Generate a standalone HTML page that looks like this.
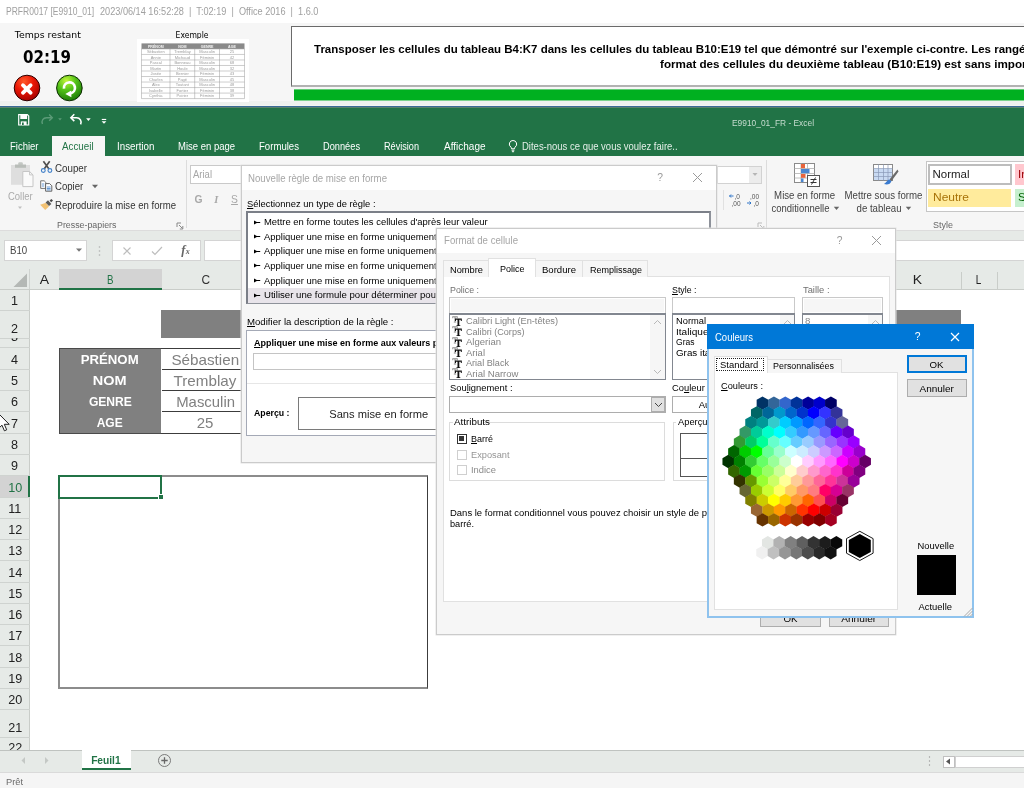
<!DOCTYPE html>
<html lang="fr"><head><meta charset="utf-8"><title>E9910_01_FR - Excel</title>
<style>
html,body{margin:0;padding:0;}
body{width:1024px;height:788px;overflow:hidden;position:relative;background:#fff;font-family:'Liberation Sans',sans-serif;font-size:12px;}
#root{will-change:transform;position:absolute;left:0;top:0;width:1024px;height:788px;overflow:hidden;}
#root div,#root svg{position:absolute;box-sizing:border-box;}
.t{position:absolute;white-space:pre;display:block;}
.t u{text-decoration:underline;text-underline-offset:1px;}
</style></head><body><div id="root">
<div style="left:0px;top:0px;width:1024px;height:23px;background:#fff;"></div><span class="t" style="left:5.90px;top:4.50px;line-height:13px;font-size:10px;color:#a0a0a0;transform:scaleX(0.8510);transform-origin:0 50%;">PRFR0017 [E9910_01]</span><span class="t" style="left:99.60px;top:4.50px;line-height:13px;font-size:10px;color:#a0a0a0;transform:scaleX(0.9149);transform-origin:0 50%;">2023/06/14 16:52:28  |  T:02:19  |  Office 2016  |  1.6.0</span><div style="left:0px;top:23px;width:1024px;height:78px;background:#f6f6f6;"></div><div style="left:0px;top:101px;width:1024px;height:5px;background:#eef1ee;"></div><span class="t" style="left:15.28px;top:28.60px;line-height:12px;font-size:9.3px;color:#000;font-family:'DejaVu Sans', sans-serif;transform:scaleX(1.0055);transform-origin:50% 50%;">Temps restant</span><span class="t" style="left:20.14px;top:45.70px;line-height:22px;font-size:17px;color:#000;font-weight:700;font-family:'DejaVu Sans', sans-serif;transform:scaleX(0.8868);transform-origin:50% 50%;">02:19</span><span class="t" style="left:171.76px;top:28.60px;line-height:12px;font-size:9.3px;color:#000;font-family:'DejaVu Sans', sans-serif;transform:scaleX(0.8234);transform-origin:50% 50%;">Exemple</span><svg style="left:12px;top:73px" width="30" height="30" viewBox="0 0 30 30">
<defs><radialGradient id="rg" cx="38%" cy="25%" r="80%"><stop offset="0" stop-color="#ff5a2a"/><stop offset="0.45" stop-color="#ec1806"/><stop offset="1" stop-color="#a00000"/></radialGradient>
<radialGradient id="gg" cx="38%" cy="22%" r="80%"><stop offset="0" stop-color="#c4f53a"/><stop offset="0.45" stop-color="#55c418"/><stop offset="1" stop-color="#1c7a08"/></radialGradient></defs>
<circle cx="15" cy="15" r="12.800" fill="url(#rg)" stroke="#2c0000" stroke-width="1"/>
<path d="M10.900 12.200 L18.700 19.800 M18.700 12.200 L10.900 19.800" stroke="#fff" stroke-width="3.700" stroke-linecap="round"/></svg><svg style="left:54px;top:73px" width="30" height="30" viewBox="0 0 30 30">
<circle cx="15.400" cy="15" r="12.800" fill="url(#gg)" stroke="#0c2c00" stroke-width="1"/>
<path d="M10 15.600 A5.500 5.500 0 1 1 16.500 20.300" fill="none" stroke="#fff" stroke-width="2.700"/>
<path d="M11.300 20.900 L17.200 17.500 L17.400 24.200 Z" fill="#fff"/></svg><svg style="left:137px;top:39px" width="112" height="63" viewBox="0 0 112 63"><rect width="112" height="63" fill="#fff"/><rect x="4.5" y="4.4" width="103.0" height="5.5200000000000005" fill="#8a8a8a"/><line x1="4.5" y1="9.92" x2="107.5" y2="9.92" stroke="#9a9a9a" stroke-width="0.5"/><line x1="4.5" y1="15.44" x2="107.5" y2="15.44" stroke="#9a9a9a" stroke-width="0.5"/><line x1="4.5" y1="20.96" x2="107.5" y2="20.96" stroke="#9a9a9a" stroke-width="0.5"/><line x1="4.5" y1="26.48" x2="107.5" y2="26.48" stroke="#9a9a9a" stroke-width="0.5"/><line x1="4.5" y1="32.00" x2="107.5" y2="32.00" stroke="#9a9a9a" stroke-width="0.5"/><line x1="4.5" y1="37.52" x2="107.5" y2="37.52" stroke="#9a9a9a" stroke-width="0.5"/><line x1="4.5" y1="43.04" x2="107.5" y2="43.04" stroke="#9a9a9a" stroke-width="0.5"/><line x1="4.5" y1="48.56" x2="107.5" y2="48.56" stroke="#9a9a9a" stroke-width="0.5"/><line x1="4.5" y1="54.08" x2="107.5" y2="54.08" stroke="#9a9a9a" stroke-width="0.5"/><line x1="4.5" y1="59.60" x2="107.5" y2="59.60" stroke="#9a9a9a" stroke-width="0.5"/><line x1="4.5" y1="9.92" x2="4.5" y2="59.6" stroke="#9a9a9a" stroke-width="0.5"/><line x1="33" y1="9.92" x2="33" y2="59.6" stroke="#9a9a9a" stroke-width="0.5"/><line x1="57.7" y1="9.92" x2="57.7" y2="59.6" stroke="#9a9a9a" stroke-width="0.5"/><line x1="82.5" y1="9.92" x2="82.5" y2="59.6" stroke="#9a9a9a" stroke-width="0.5"/><line x1="107.5" y1="9.92" x2="107.5" y2="59.6" stroke="#9a9a9a" stroke-width="0.5"/><text x="18.8" y="8.51" font-size="3.6" font-weight="bold" fill="#f4f4f4" text-anchor="middle">PRÉNOM</text><text x="45.4" y="8.51" font-size="3.6" font-weight="bold" fill="#f4f4f4" text-anchor="middle">NOM</text><text x="70.1" y="8.51" font-size="3.6" font-weight="bold" fill="#f4f4f4" text-anchor="middle">GENRE</text><text x="95.0" y="8.51" font-size="3.6" font-weight="bold" fill="#f4f4f4" text-anchor="middle">AGE</text><text x="18.8" y="14.03" font-size="4" fill="#9c9c9c" text-anchor="middle">Sébastien</text><text x="45.4" y="14.03" font-size="4" fill="#9c9c9c" text-anchor="middle">Tremblay</text><text x="70.1" y="14.03" font-size="4" fill="#9c9c9c" text-anchor="middle">Masculin</text><text x="95.0" y="14.03" font-size="4" fill="#9c9c9c" text-anchor="middle">25</text><text x="18.8" y="19.55" font-size="4" fill="#9c9c9c" text-anchor="middle">Annie</text><text x="45.4" y="19.55" font-size="4" fill="#9c9c9c" text-anchor="middle">Michaud</text><text x="70.1" y="19.55" font-size="4" fill="#9c9c9c" text-anchor="middle">Féminin</text><text x="95.0" y="19.55" font-size="4" fill="#9c9c9c" text-anchor="middle">42</text><text x="18.8" y="25.07" font-size="4" fill="#9c9c9c" text-anchor="middle">Pascal</text><text x="45.4" y="25.07" font-size="4" fill="#9c9c9c" text-anchor="middle">Bonneau</text><text x="70.1" y="25.07" font-size="4" fill="#9c9c9c" text-anchor="middle">Masculin</text><text x="95.0" y="25.07" font-size="4" fill="#9c9c9c" text-anchor="middle">68</text><text x="18.8" y="30.59" font-size="4" fill="#9c9c9c" text-anchor="middle">Martin</text><text x="45.4" y="30.59" font-size="4" fill="#9c9c9c" text-anchor="middle">Houle</text><text x="70.1" y="30.59" font-size="4" fill="#9c9c9c" text-anchor="middle">Masculin</text><text x="95.0" y="30.59" font-size="4" fill="#9c9c9c" text-anchor="middle">32</text><text x="18.8" y="36.11" font-size="4" fill="#9c9c9c" text-anchor="middle">Josée</text><text x="45.4" y="36.11" font-size="4" fill="#9c9c9c" text-anchor="middle">Bernier</text><text x="70.1" y="36.11" font-size="4" fill="#9c9c9c" text-anchor="middle">Féminin</text><text x="95.0" y="36.11" font-size="4" fill="#9c9c9c" text-anchor="middle">43</text><text x="18.8" y="41.63" font-size="4" fill="#9c9c9c" text-anchor="middle">Charles</text><text x="45.4" y="41.63" font-size="4" fill="#9c9c9c" text-anchor="middle">Pagé</text><text x="70.1" y="41.63" font-size="4" fill="#9c9c9c" text-anchor="middle">Masculin</text><text x="95.0" y="41.63" font-size="4" fill="#9c9c9c" text-anchor="middle">45</text><text x="18.8" y="47.15" font-size="4" fill="#9c9c9c" text-anchor="middle">Alex</text><text x="45.4" y="47.15" font-size="4" fill="#9c9c9c" text-anchor="middle">Toutant</text><text x="70.1" y="47.15" font-size="4" fill="#9c9c9c" text-anchor="middle">Masculin</text><text x="95.0" y="47.15" font-size="4" fill="#9c9c9c" text-anchor="middle">48</text><text x="18.8" y="52.67" font-size="4" fill="#9c9c9c" text-anchor="middle">Isabelle</text><text x="45.4" y="52.67" font-size="4" fill="#9c9c9c" text-anchor="middle">Fortier</text><text x="70.1" y="52.67" font-size="4" fill="#9c9c9c" text-anchor="middle">Féminin</text><text x="95.0" y="52.67" font-size="4" fill="#9c9c9c" text-anchor="middle">38</text><text x="18.8" y="58.19" font-size="4" fill="#9c9c9c" text-anchor="middle">Cynthia</text><text x="45.4" y="58.19" font-size="4" fill="#9c9c9c" text-anchor="middle">Poirier</text><text x="70.1" y="58.19" font-size="4" fill="#9c9c9c" text-anchor="middle">Féminin</text><text x="95.0" y="58.19" font-size="4" fill="#9c9c9c" text-anchor="middle">39</text></svg><div style="left:291px;top:26px;width:740px;height:61px;background:#fff;border:1px solid #6a6a6a;border-bottom:2px solid #b2b2b2;"></div><span class="t" style="left:314.00px;top:42.00px;line-height:14px;font-size:10.5px;color:#000;font-weight:700;transform:scaleX(1.0942);transform-origin:0 50%;">Transposer les cellules du tableau B4:K7 dans les cellules du tableau B10:E19 tel que démontré sur l&#x27;exemple ci-contre. Les rangées</span><span class="t" style="left:660.00px;top:56.50px;line-height:14px;font-size:10.5px;color:#000;font-weight:700;transform:scaleX(1.1100);transform-origin:0 50%;">format des cellules du deuxième tableau (B10:E19) est sans importance</span><div style="left:294px;top:89px;width:740px;height:12px;background:#00b020;border-top:1px solid #62cc76;border-bottom:1px solid #7bd38b;"></div><div style="left:0px;top:105px;width:1024px;height:1px;background:#f3f5f0;"></div><div style="left:0px;top:106px;width:1024px;height:1px;background:#3a6a96;"></div><div style="left:0px;top:107px;width:1024px;height:1px;background:#5a826e;"></div><div style="left:0px;top:108px;width:1024px;height:47.5px;background:#217346;"></div><svg style="left:16px;top:112px" width="100" height="18" viewBox="0 0 100 18">
<path d="M2.700 2.700h8.600l1.400 1.400v8.900h-10z" fill="none" stroke="#fff" stroke-width="1.200"/><rect x="4.300" y="2.700" width="6.800" height="4.300" fill="#fff"/><rect x="4.800" y="9.400" width="5.800" height="3.600" fill="#fff"/><rect x="6" y="10.500" width="1.700" height="2.500" fill="#217346"/>
<path d="M26.500 12c-1.500-3.200.8-6.300 4-6.300h5" fill="none" stroke="#5c9b78" stroke-width="1.400"/><path d="M33.200 2.600l3.100 3.100-3.100 3.100" fill="none" stroke="#5c9b78" stroke-width="1.400"/>
<path d="M42.200 6.200h3.600l-1.800 2.200z" fill="#5c9b78"/>
<path d="M64.600 12.400c1.600-3.300-.7-6.700-4-6.700h-5.200" fill="none" stroke="#fff" stroke-width="1.600"/><path d="M58.300 2.300l-3.400 3.400 3.400 3.400" fill="none" stroke="#fff" stroke-width="1.600"/>
<path d="M70.100 6.200h4.600l-2.300 2.700z" fill="#fff"/>
<rect x="85.800" y="6.900" width="4.400" height="1.100" fill="#fff"/><path d="M85.600 9.200h4.800l-2.400 2.600z" fill="#fff"/>
</svg><span class="t" style="left:732.00px;top:116.00px;line-height:13px;font-size:9.700000000000001px;color:#c6dccf;transform:scaleX(0.8652);transform-origin:0 50%;">E9910_01_FR - Excel</span><div style="left:51.5px;top:136px;width:53.5px;height:20px;background:#f6f6f6;"></div><span class="t" style="left:10.00px;top:140.00px;line-height:13px;font-size:10.3px;color:#fff;transform:scaleX(0.9221);transform-origin:0 50%;">Fichier</span><span class="t" style="left:62.00px;top:140.00px;line-height:13px;font-size:10.3px;color:#217346;transform:scaleX(0.9517);transform-origin:0 50%;">Accueil</span><span class="t" style="left:117.00px;top:140.00px;line-height:13px;font-size:10.3px;color:#fff;transform:scaleX(0.9468);transform-origin:0 50%;">Insertion</span><span class="t" style="left:178.00px;top:140.00px;line-height:13px;font-size:10.3px;color:#fff;transform:scaleX(0.9219);transform-origin:0 50%;">Mise en page</span><span class="t" style="left:259.00px;top:140.00px;line-height:13px;font-size:10.3px;color:#fff;transform:scaleX(0.9319);transform-origin:0 50%;">Formules</span><span class="t" style="left:323.00px;top:140.00px;line-height:13px;font-size:10.3px;color:#fff;transform:scaleX(0.8976);transform-origin:0 50%;">Données</span><span class="t" style="left:384.00px;top:140.00px;line-height:13px;font-size:10.3px;color:#fff;transform:scaleX(0.8861);transform-origin:0 50%;">Révision</span><span class="t" style="left:443.50px;top:140.00px;line-height:13px;font-size:10.3px;color:#fff;transform:scaleX(0.9708);transform-origin:0 50%;">Affichage</span><svg style="left:507px;top:139px" width="12" height="15" viewBox="0 0 12 15"><path d="M6 1.5a3.6 3.6 0 0 0-2.2 6.5c.5.5.7 1 .7 1.8h3c0-.8.2-1.3.7-1.8A3.6 3.6 0 0 0 6 1.500z" fill="none" stroke="#fff" stroke-width="1"/><path d="M4.6 11.2h2.8M4.9 12.7h2.2" stroke="#fff" stroke-width="1"/></svg><span class="t" style="left:522.40px;top:139.60px;line-height:13px;font-size:10.3px;color:#e4efe8;transform:scaleX(0.9216);transform-origin:0 50%;">Dites-nous ce que vous voulez faire..</span><div style="left:0px;top:155.5px;width:1024px;height:75.5px;background:#f6f6f6;border-bottom:1px solid #dcdcdc;"></div><svg style="left:9px;top:161px" width="26" height="28" viewBox="0 0 26 28">
<rect x="2" y="4" width="19" height="19.800" fill="#dedede"/><rect x="9.300" y="1.200" width="4.500" height="3.500" rx="1" fill="#c4c8c4"/><rect x="6" y="3.500" width="11" height="3.300" fill="#b9bdb9"/>
<path d="M13.800 10.500h6.800l3.400 3.400v11.700h-10.200z" fill="#fafafa" stroke="#c6c6c6"/><path d="M20.600 10.500v3.400h3.400" fill="none" stroke="#c6c6c6"/></svg><span class="t" style="left:7.80px;top:189.50px;line-height:13px;font-size:10.3px;color:#ababab;transform:scaleX(0.9180);transform-origin:0 50%;">Coller</span><svg style="left:16.200px;top:206.300px" width="8" height="5" viewBox="0 0 8 5"><path d="M2 .6h4L4 3z" fill="#c0c0c0"/></svg><svg style="left:39px;top:159px" width="16" height="16" viewBox="0 0 16 16"><path d="M4.400 2.300l5.400 7.500M10.700 2.300L5.300 9.800" stroke="#505050" stroke-width="1.700" fill="none"/><circle cx="4.300" cy="11.500" r="1.900" fill="none" stroke="#3f7fc8" stroke-width="1.100"/><circle cx="10.900" cy="11.500" r="1.900" fill="none" stroke="#3f7fc8" stroke-width="1.100"/></svg><span class="t" style="left:55.40px;top:161.60px;line-height:13px;font-size:10.3px;color:#333;transform:scaleX(0.9473);transform-origin:0 50%;">Couper</span><svg style="left:39px;top:178px" width="16" height="16" viewBox="0 0 16 16"><path d="M1.700 2.800h3.500l1.600 1.600v6h-5.100z" fill="#fff" stroke="#666" stroke-width=".9"/><path d="M2.800 6h2.500M2.800 8h2.500" stroke="#3f7fc8" stroke-width=".8"/><path d="M6.600 5.600h4l2.200 2.200v5.400h-6.200z" fill="#fff" stroke="#555" stroke-width=".9"/><path d="M7.800 9h3.800M7.800 10.500h3.800M7.800 11.900h3.800" stroke="#3f7fc8" stroke-width=".8"/></svg><span class="t" style="left:55.40px;top:180.20px;line-height:13px;font-size:10.3px;color:#333;transform:scaleX(0.9326);transform-origin:0 50%;">Copier</span><svg style="left:91px;top:184px" width="8" height="5" viewBox="0 0 8 5"><path d="M1 .8h6L4 4.200z" fill="#666"/></svg><svg style="left:39px;top:196px" width="18" height="17" viewBox="0 0 18 17"><path d="M1.200 8.800l5.800-2 3 3.600-3.800 3.700z" fill="#f2c274"/><path d="M6.600 6.400l2.400-2.200 3.400 3.700-2.400 2.200z" fill="#5a5a5a"/><path d="M10.600 4.600l1.800-1.700 1.600 1.700-1.800 1.700z" fill="#4a4a4a"/></svg><span class="t" style="left:55.40px;top:199.20px;line-height:13px;font-size:10.3px;color:#333;transform:scaleX(0.9313);transform-origin:0 50%;">Reproduire la mise en forme</span><span class="t" style="left:56.80px;top:217.90px;line-height:13px;font-size:9.700000000000001px;color:#666;transform:scaleX(0.9117);transform-origin:0 50%;">Presse-papiers</span><svg style="left:176px;top:222px" width="8" height="8" viewBox="0 0 8 8"><path d="M1 5V1h4" fill="none" stroke="#888" stroke-width="1"/><path d="M3 3l3.500 3.500M6.800 4v3H3.800" fill="none" stroke="#888" stroke-width="1"/></svg><div style="left:186px;top:160px;width:1px;height:68px;background:#dcdcdc;"></div><div style="left:190px;top:165px;width:60px;height:18.5px;background:#fff;border:1px solid #c9c9c9;"></div><span class="t" style="left:192.50px;top:168.40px;line-height:13px;font-size:10.3px;color:#a6a6a6;transform:scaleX(0.9219);transform-origin:0 50%;">Arial</span><span class="t" style="left:194.49px;top:193.20px;line-height:13px;font-size:10.3px;color:#a8a8a8;font-weight:700;">G</span><span class="t" style="left:214.29px;top:193.20px;line-height:13px;font-size:10.3px;color:#a8a8a8;font-weight:700;font-style:italic;font-family:'Liberation Serif', serif;">I</span><span class="t" style="left:231.06px;top:193.20px;line-height:13px;font-size:10.3px;color:#a8a8a8;text-decoration:underline;">S</span><div style="left:716.5px;top:165.5px;width:45px;height:18px;background:#fff;border:1px solid #d2d2d2;"></div><div style="left:748.5px;top:166.5px;width:12px;height:16px;background:#ececec;"></div><svg style="left:751px;top:172px" width="8" height="5" viewBox="0 0 8 5"><path d="M1.500 1h5L4 4z" fill="#b5b5b5"/></svg><div style="left:723px;top:190px;width:1px;height:20px;background:#e1e1e1;"></div><svg style="left:728px;top:192px" width="34" height="16" viewBox="0 0 34 16"><g font-size="6.500" fill="#555" font-family="Liberation Sans, sans-serif"><text x="6.500" y="6.500">,0</text><text x="3.500" y="13.500">,00</text><text x="22" y="6.500">,00</text><text x="25.500" y="13.500">,0</text></g><path d="M5.500 4H1.500M3 2.500L1.500 4 3 5.500" stroke="#2e75c8" fill="none" stroke-width="1"/><path d="M19 11h4M21.500 9.500L23 11l-1.500 1.500" stroke="#2e75c8" fill="none" stroke-width="1"/></svg><svg style="left:757px;top:222px" width="8" height="8" viewBox="0 0 8 8"><path d="M1 5V1h4" fill="none" stroke="#bbb" stroke-width="1"/><path d="M3 3l3.500 3.500M6.800 4v3H3.800" fill="none" stroke="#bbb" stroke-width="1"/></svg><div style="left:765.5px;top:160px;width:1px;height:68px;background:#dcdcdc;"></div><svg style="left:792.700px;top:161.500px" width="28" height="26" viewBox="0 0 28 26"><rect x="1.500" y="1.500" width="20" height="19" fill="#fff" stroke="#8a8a8a"/><path d="M1.500 6.500h20M1.500 11.500h20M1.500 16h20M8 1.500v19M14.500 1.500v19" stroke="#b0b0b0" stroke-width=".8"/><rect x="8" y="2" width="4" height="4.200" fill="#e8643c"/><rect x="8" y="7" width="8.500" height="4.200" fill="#4a86d0"/><rect x="8" y="12" width="4.500" height="3.800" fill="#e8643c"/><rect x="8" y="16.500" width="2.500" height="3.500" fill="#4a86d0"/><rect x="14.500" y="13.500" width="12" height="11" fill="#fff" stroke="#555"/><path d="M17.500 17.500h6M17.500 20.500h6M22.500 15.500l-4 7" stroke="#333" stroke-width="1"/></svg><span class="t" style="left:772.38px;top:188.90px;line-height:13px;font-size:10.3px;color:#444;transform:scaleX(0.9349);transform-origin:50% 50%;">Mise en forme</span><span class="t" style="left:769.01px;top:202.20px;line-height:13px;font-size:10.3px;color:#444;transform:scaleX(0.9209);transform-origin:50% 50%;">conditionnelle</span><svg style="left:833px;top:206px" width="7" height="5" viewBox="0 0 7 5"><path d="M.8 .8h5.400L3.500 4z" fill="#666"/></svg><svg style="left:871.500px;top:163px" width="28" height="26" viewBox="0 0 28 26"><rect x="1.500" y="1.500" width="19" height="16" fill="#fff" stroke="#8a8a8a"/><rect x="2" y="6" width="18" height="11" fill="#c9daf2"/><path d="M1.500 5.500h19M1.500 9.500h19M1.500 13.500h19M6.500 1.500v16M11.500 1.500v16M16 1.500v16" stroke="#8a9ab8" stroke-width=".7"/><path d="M25.500 6.500l-8 10 2 1.500 7-9.500z" fill="#6a6a6a"/><path d="M17 16.500c-2 .5-2.500 3-5 4.500 3 1 6.500.5 7.500-3z" fill="#3a7bd0"/></svg><span class="t" style="left:841.51px;top:188.90px;line-height:13px;font-size:10.3px;color:#444;transform:scaleX(0.9399);transform-origin:50% 50%;">Mettre sous forme</span><span class="t" style="left:855.45px;top:202.20px;line-height:13px;font-size:10.3px;color:#444;transform:scaleX(0.9354);transform-origin:50% 50%;">de tableau</span><svg style="left:905px;top:206px" width="7" height="5" viewBox="0 0 7 5"><path d="M.8 .8h5.400L3.500 4z" fill="#666"/></svg><div style="left:926px;top:160.5px;width:110px;height:51px;background:#fff;border:1px solid #c6c6c6;"></div><div style="left:928px;top:163.5px;width:84px;height:21.5px;background:#fff;border:2px solid #bdbdbd;"></div><span class="t" style="left:932.50px;top:167.40px;line-height:15px;font-size:11.5px;color:#222;">Normal</span><div style="left:928px;top:188.5px;width:83px;height:18px;background:#ffeb9c;"></div><span class="t" style="left:932.50px;top:190.40px;line-height:15px;font-size:11.5px;color:#a87308;transform:scaleX(1.0425);transform-origin:0 50%;">Neutre</span><div style="left:1015px;top:163.5px;width:12px;height:21.5px;background:#ffc7ce;"></div><span class="t" style="left:1018.00px;top:167.40px;line-height:15px;font-size:11.5px;color:#9c0006;">In</span><div style="left:1015px;top:188.5px;width:12px;height:18px;background:#c6efce;"></div><span class="t" style="left:1018.00px;top:190.40px;line-height:15px;font-size:11.5px;color:#006100;">S</span><span class="t" style="left:932.50px;top:217.90px;line-height:13px;font-size:9.700000000000001px;color:#666;transform:scaleX(0.9282);transform-origin:0 50%;">Style</span><div style="left:0px;top:231px;width:1024px;height:38px;background:#e6eae7;"></div><div style="left:4px;top:240px;width:82.5px;height:21px;background:#fff;border:1px solid #d4d4d4;"></div><span class="t" style="left:9.80px;top:244.30px;line-height:13px;font-size:10.3px;color:#444;transform:scaleX(0.9384);transform-origin:0 50%;">B10</span><svg style="left:75px;top:248px" width="8" height="5" viewBox="0 0 8 5"><path d="M1 .5h6L4 3.700z" fill="#777"/></svg><svg style="left:98px;top:245px" width="3" height="12" viewBox="0 0 3 12"><circle cx="1.500" cy="2" r=".8" fill="#b0b0b0"/><circle cx="1.500" cy="6" r=".8" fill="#b0b0b0"/><circle cx="1.500" cy="10" r=".8" fill="#b0b0b0"/></svg><div style="left:112px;top:240px;width:88.5px;height:21px;background:#fff;border:1px solid #d4d4d4;"></div><svg style="left:122px;top:246px" width="10" height="10" viewBox="0 0 10 10"><path d="M1.500 1.500l7 7M8.500 1.500l-7 7" stroke="#bdbdbd" stroke-width="1.100"/></svg><svg style="left:151px;top:246px" width="12" height="10" viewBox="0 0 12 10"><path d="M1 5.500l3 3 7-7.500" fill="none" stroke="#bdbdbd" stroke-width="1.200"/></svg><span class="t" style="left:181.21px;top:242.30px;line-height:16px;font-size:12.5px;color:#666;font-weight:700;font-style:italic;font-family:'Liberation Serif', serif;">f</span><span class="t" style="left:185.80px;top:247.30px;line-height:10px;font-size:8px;color:#666;font-weight:700;font-style:italic;font-family:'Liberation Serif', serif;">x</span><div style="left:204px;top:240px;width:830px;height:21px;background:#fff;border:1px solid #d4d4d4;"></div><div style="left:0px;top:269px;width:1024px;height:481px;background:#fff;"></div><div style="left:0px;top:269px;width:1024px;height:20.5px;background:#e6eae7;border-bottom:1px solid #c9cdc9;"></div><svg style="left:13px;top:273px" width="15" height="15" viewBox="0 0 15 15"><path d="M14 0.500V14H0.500z" fill="#b4b8b5"/></svg><div style="left:29px;top:269px;width:1px;height:20px;background:#cfd3d0;"></div><span class="t" style="left:40.16px;top:271.00px;line-height:17px;font-size:13px;color:#222;transform:scaleX(1.0724);transform-origin:50% 50%;">A</span><div style="left:59px;top:269px;width:102.5px;height:20.5px;background:#d3d3d3;border-bottom:2px solid #217346;"></div><span class="t" style="left:105.66px;top:270.80px;line-height:17px;font-size:13px;color:#217346;transform:scaleX(0.7495);transform-origin:50% 50%;">B</span><span class="t" style="left:201.10px;top:270.80px;line-height:17px;font-size:13px;color:#333;transform:scaleX(0.9158);transform-origin:50% 50%;">C</span><span class="t" style="left:912.66px;top:271.00px;line-height:17px;font-size:13px;color:#222;transform:scaleX(1.0724);transform-origin:50% 50%;">K</span><div style="left:961px;top:272px;width:1px;height:17px;background:#c9cdc9;"></div><span class="t" style="left:974.88px;top:270.80px;line-height:17px;font-size:13px;color:#222;transform:scaleX(0.7603);transform-origin:50% 50%;">L</span><div style="left:996.5px;top:272px;width:1px;height:17px;background:#c9cdc9;"></div><div style="left:0px;top:289.5px;width:30px;height:460px;background:#e6eae7;border-right:1px solid #c9cdc9;"></div><div style="left:0px;top:310.0px;width:29.5px;height:1px;background:#cfd3d0;"></div><span class="t" style="left:11.18px;top:292.40px;line-height:17px;font-size:13px;color:#222;transform:scaleX(0.97);">1</span><div style="left:0px;top:337.5px;width:29.5px;height:1px;background:#cfd3d0;"></div><span class="t" style="left:11.18px;top:320.20px;line-height:17px;font-size:13px;color:#222;transform:scaleX(0.97);">2</span><div style="left:0px;top:347.0px;width:29.5px;height:1px;background:#cfd3d0;"></div><div style="left:0px;top:338px;width:29.5px;height:9.0px;overflow:hidden;"><span class="t" style="left:11.18px;top:-9.60px;line-height:17px;font-size:13px;color:#222;transform:scaleX(0.97);">3</span></div><div style="left:0px;top:368.5px;width:29.5px;height:1px;background:#cfd3d0;"></div><span class="t" style="left:11.18px;top:350.90px;line-height:17px;font-size:13px;color:#222;transform:scaleX(0.97);">4</span><div style="left:0px;top:390.0px;width:29.5px;height:1px;background:#cfd3d0;"></div><span class="t" style="left:11.18px;top:372.40px;line-height:17px;font-size:13px;color:#222;transform:scaleX(0.97);">5</span><div style="left:0px;top:411.0px;width:29.5px;height:1px;background:#cfd3d0;"></div><span class="t" style="left:11.18px;top:393.40px;line-height:17px;font-size:13px;color:#222;transform:scaleX(0.97);">6</span><div style="left:0px;top:432.5px;width:29.5px;height:1px;background:#cfd3d0;"></div><span class="t" style="left:11.18px;top:414.90px;line-height:17px;font-size:13px;color:#222;transform:scaleX(0.97);">7</span><div style="left:0px;top:453.5px;width:29.5px;height:1px;background:#cfd3d0;"></div><span class="t" style="left:11.18px;top:435.90px;line-height:17px;font-size:13px;color:#222;transform:scaleX(0.97);">8</span><div style="left:0px;top:475.0px;width:29.5px;height:1px;background:#cfd3d0;"></div><span class="t" style="left:11.18px;top:457.40px;line-height:17px;font-size:13px;color:#222;transform:scaleX(0.97);">9</span><div style="left:0px;top:475.5px;width:29.5px;height:21.5px;background:#d3d3d3;border-right:2px solid #217346;"></div><div style="left:0px;top:496.5px;width:29.5px;height:1px;background:#cfd3d0;"></div><span class="t" style="left:7.57px;top:478.90px;line-height:17px;font-size:13px;color:#217346;transform:scaleX(0.97);">10</span><div style="left:0px;top:517.5px;width:29.5px;height:1px;background:#cfd3d0;"></div><span class="t" style="left:8.05px;top:499.90px;line-height:17px;font-size:13px;color:#222;transform:scaleX(0.97);">11</span><div style="left:0px;top:539.0px;width:29.5px;height:1px;background:#cfd3d0;"></div><span class="t" style="left:7.57px;top:521.40px;line-height:17px;font-size:13px;color:#222;transform:scaleX(0.97);">12</span><div style="left:0px;top:560.0px;width:29.5px;height:1px;background:#cfd3d0;"></div><span class="t" style="left:7.57px;top:542.40px;line-height:17px;font-size:13px;color:#222;transform:scaleX(0.97);">13</span><div style="left:0px;top:581.5px;width:29.5px;height:1px;background:#cfd3d0;"></div><span class="t" style="left:7.57px;top:563.90px;line-height:17px;font-size:13px;color:#222;transform:scaleX(0.97);">14</span><div style="left:0px;top:602.5px;width:29.5px;height:1px;background:#cfd3d0;"></div><span class="t" style="left:7.57px;top:584.90px;line-height:17px;font-size:13px;color:#222;transform:scaleX(0.97);">15</span><div style="left:0px;top:624.0px;width:29.5px;height:1px;background:#cfd3d0;"></div><span class="t" style="left:7.57px;top:606.40px;line-height:17px;font-size:13px;color:#222;transform:scaleX(0.97);">16</span><div style="left:0px;top:645.0px;width:29.5px;height:1px;background:#cfd3d0;"></div><span class="t" style="left:7.57px;top:627.40px;line-height:17px;font-size:13px;color:#222;transform:scaleX(0.97);">17</span><div style="left:0px;top:666.5px;width:29.5px;height:1px;background:#cfd3d0;"></div><span class="t" style="left:7.57px;top:648.90px;line-height:17px;font-size:13px;color:#222;transform:scaleX(0.97);">18</span><div style="left:0px;top:687.5px;width:29.5px;height:1px;background:#cfd3d0;"></div><span class="t" style="left:7.57px;top:669.90px;line-height:17px;font-size:13px;color:#222;transform:scaleX(0.97);">19</span><div style="left:0px;top:709.0px;width:29.5px;height:1px;background:#cfd3d0;"></div><span class="t" style="left:7.57px;top:691.40px;line-height:17px;font-size:13px;color:#222;transform:scaleX(0.97);">20</span><div style="left:0px;top:736.5px;width:29.5px;height:1px;background:#cfd3d0;"></div><span class="t" style="left:7.57px;top:718.90px;line-height:17px;font-size:13px;color:#222;transform:scaleX(0.97);">21</span><div style="left:0px;top:759.5px;width:29.5px;height:1px;background:#cfd3d0;"></div><div style="left:0px;top:737px;width:29.5px;height:12.5px;overflow:hidden;"><span class="t" style="left:7.57px;top:1.80px;line-height:17px;font-size:13px;color:#222;transform:scaleX(0.97);">22</span></div><div style="left:161px;top:310px;width:799.5px;height:27.5px;background:#808080;"></div><div style="left:58.5px;top:347.5px;width:103px;height:86px;background:#808080;border:1px solid #4a4a4a;"></div><div style="left:161px;top:347.5px;width:300px;height:86px;background:#fff;border-top:1px solid #3c3c3c;border-bottom:1px solid #3c3c3c;"></div><div style="left:161.5px;top:368.5px;width:300px;height:1px;background:#3c3c3c;"></div><div style="left:161.5px;top:390.0px;width:300px;height:1px;background:#3c3c3c;"></div><div style="left:161.5px;top:411.0px;width:300px;height:1px;background:#3c3c3c;"></div><span class="t" style="left:82.36px;top:352.00px;line-height:16px;font-size:12.6px;color:#fff;font-weight:700;transform:scaleX(1.0492);transform-origin:50% 50%;">PRÉNOM</span><span class="t" style="left:95.30px;top:373.20px;line-height:16px;font-size:12.6px;color:#fff;font-weight:700;transform:scaleX(1.1500);transform-origin:50% 50%;">NOM</span><span class="t" style="left:87.60px;top:394.20px;line-height:16px;font-size:12.6px;color:#fff;font-weight:700;transform:scaleX(0.9599);transform-origin:50% 50%;">GENRE</span><span class="t" style="left:96.35px;top:415.20px;line-height:16px;font-size:12.6px;color:#fff;font-weight:700;transform:scaleX(0.9525);transform-origin:50% 50%;">AGE</span><span class="t" style="left:173.05px;top:350.50px;line-height:19px;font-size:14.5px;color:#808080;transform:scaleX(1.0496);transform-origin:50% 50%;">Sébastien</span><span class="t" style="left:175.35px;top:371.70px;line-height:19px;font-size:14.5px;color:#808080;transform:scaleX(1.0469);transform-origin:50% 50%;">Tremblay</span><span class="t" style="left:176.69px;top:392.70px;line-height:19px;font-size:14.5px;color:#808080;transform:scaleX(1.0276);transform-origin:50% 50%;">Masculin</span><span class="t" style="left:197.23px;top:413.70px;line-height:19px;font-size:14.5px;color:#808080;transform:scaleX(1.0347);transform-origin:50% 50%;">25</span><div style="left:58px;top:475px;width:370px;height:214px;border:2px solid #8c8c8c;border-right:1px solid #3c3c3c;background:#fff;"></div><div style="left:58px;top:474.5px;width:104px;height:24px;border:2px solid #217346;"></div><div style="left:158px;top:494px;width:5px;height:5px;background:#217346;border:1px solid #fff;border-right:0;border-bottom:0;"></div><svg style="left:-4px;top:412px" width="16" height="22" viewBox="0 0 16 22"><path d="M2.500 1.500v15l3.500-3.300 2.400 5.600 2.300-1-2.400-5.500h4.900z" fill="#fff" stroke="#222" stroke-width="1"/></svg><div style="left:0px;top:749.5px;width:1024px;height:23.5px;background:#e6eae7;border-top:1px solid #bfc3c0;"></div><svg style="left:19px;top:756px" width="34" height="9" viewBox="0 0 34 9"><path d="M6 1L2.500 4.500 6 8z" fill="#c4c8c5"/><path d="M26 1l3.500 3.500L26 8z" fill="#c4c8c5"/></svg><div style="left:81.5px;top:749.5px;width:49px;height:20.5px;background:#fff;border-bottom:2px solid #217346;"></div><span class="t" style="left:91.12px;top:754.00px;line-height:13px;font-size:10.3px;color:#217346;font-weight:700;transform:scaleX(0.9911);transform-origin:50% 50%;">Feuil1</span><svg style="left:157px;top:753px" width="15" height="15" viewBox="0 0 15 15"><circle cx="7.500" cy="7.500" r="6" fill="none" stroke="#7a7a7a" stroke-width="1"/><path d="M4.300 7.500h6.400M7.500 4.300v6.400" stroke="#666" stroke-width="1.300"/></svg><svg style="left:928px;top:755px" width="3" height="12" viewBox="0 0 3 12"><circle cx="1.500" cy="2" r=".7" fill="#999"/><circle cx="1.500" cy="6" r=".7" fill="#999"/><circle cx="1.500" cy="10" r=".7" fill="#999"/></svg><div style="left:942.5px;top:755.5px;width:12px;height:12px;background:#fff;border:1px solid #c0c0c0;"></div><svg style="left:945px;top:758px" width="6" height="7" viewBox="0 0 6 7"><path d="M5 .5v6L1 3.500z" fill="#555"/></svg><div style="left:955px;top:755.5px;width:80px;height:12px;background:#fff;border:1px solid #d0d0d0;"></div><div style="left:0px;top:772px;width:1024px;height:16px;background:#f5f5f5;border-top:1px solid #dadada;"></div><span class="t" style="left:6.00px;top:774.70px;line-height:13px;font-size:9.700000000000001px;color:#6a6a6a;transform:scaleX(0.9561);transform-origin:0 50%;">Prêt</span><div style="left:240.5px;top:164.5px;width:476.5px;height:298px;background:#f6f6f6;border:1px solid #cbcbcb;box-shadow:0 0 0 0.500px #e2e2e2;"></div><div style="left:241.5px;top:165.5px;width:474.5px;height:24.5px;background:#fff;"></div><span class="t" style="left:248.00px;top:171.50px;line-height:13px;font-size:10.3px;color:#a6a6a6;transform:scaleX(0.9377);transform-origin:0 50%;">Nouvelle règle de mise en forme</span><span class="t" style="left:657.13px;top:171.00px;line-height:13px;font-size:10.3px;color:#999;">?</span><svg style="left:692px;top:172px" width="11" height="11" viewBox="0 0 11 11"><path d="M1 1l9 9M10 1l-9 9" stroke="#9a9a9a" stroke-width="1"/></svg><span class="t" style="left:247.00px;top:196.90px;line-height:13px;font-size:9.7px;color:#000;transform:scaleX(0.9659);transform-origin:0 50%;"><u>S</u>électionnez un type de règle :</span><div style="left:246px;top:211px;width:464.5px;height:92.5px;background:#fff;border:2px solid #7b7f88;border-right-color:#8e929a;border-bottom:1px solid #8e929a;"></div><div style="left:248px;top:287.5px;width:460.5px;height:15px;background:#e8e4ea;"></div><svg style="left:254px;top:219.5px" width="7" height="5" viewBox="0 0 7 5"><path d="M0 .6v3.800l2.800-1.300h3.400v-1.200h-3.400z" fill="#000"/></svg><span class="t" style="left:263.70px;top:215.20px;line-height:13px;font-size:9.7px;color:#000;transform:scaleX(0.9738);transform-origin:0 50%;">Mettre en forme toutes les cellules d&#x27;après leur valeur</span><svg style="left:254px;top:234.1px" width="7" height="5" viewBox="0 0 7 5"><path d="M0 .6v3.800l2.800-1.300h3.400v-1.200h-3.400z" fill="#000"/></svg><span class="t" style="left:263.60px;top:229.80px;line-height:13px;font-size:9.7px;color:#000;transform:scaleX(0.9743);transform-origin:0 50%;">Appliquer une mise en forme uniquement aux cellules qui contiennent</span><svg style="left:254px;top:248.7px" width="7" height="5" viewBox="0 0 7 5"><path d="M0 .6v3.800l2.800-1.300h3.400v-1.200h-3.400z" fill="#000"/></svg><span class="t" style="left:263.60px;top:244.40px;line-height:13px;font-size:9.7px;color:#000;transform:scaleX(0.9743);transform-origin:0 50%;">Appliquer une mise en forme uniquement aux valeurs rangées parmi les premières ou les dernières valeurs</span><svg style="left:254px;top:263.3px" width="7" height="5" viewBox="0 0 7 5"><path d="M0 .6v3.800l2.800-1.300h3.400v-1.200h-3.400z" fill="#000"/></svg><span class="t" style="left:263.60px;top:259.00px;line-height:13px;font-size:9.7px;color:#000;transform:scaleX(0.9743);transform-origin:0 50%;">Appliquer une mise en forme uniquement aux valeurs au-dessus ou en dessous de la moyenne</span><svg style="left:254px;top:277.9px" width="7" height="5" viewBox="0 0 7 5"><path d="M0 .6v3.800l2.800-1.300h3.400v-1.200h-3.400z" fill="#000"/></svg><span class="t" style="left:263.60px;top:273.60px;line-height:13px;font-size:9.7px;color:#000;transform:scaleX(0.9743);transform-origin:0 50%;">Appliquer une mise en forme uniquement aux valeurs uniques ou aux doublons</span><svg style="left:254px;top:292.5px" width="7" height="5" viewBox="0 0 7 5"><path d="M0 .6v3.800l2.800-1.300h3.400v-1.200h-3.400z" fill="#000"/></svg><span class="t" style="left:263.60px;top:288.20px;line-height:13px;font-size:9.7px;color:#000;transform:scaleX(0.9920);transform-origin:0 50%;">Utiliser une formule pour déterminer pour quelles cellules le format sera appliqué</span><span class="t" style="left:247.00px;top:315.40px;line-height:13px;font-size:9.7px;color:#000;transform:scaleX(0.9929);transform-origin:0 50%;"><u>M</u>odifier la description de la règle :</span><div style="left:246px;top:330px;width:464.5px;height:105.5px;background:#fff;border:1px solid #a4a9b6;"></div><span class="t" style="left:254.00px;top:336.30px;line-height:13px;font-size:9.7px;color:#000;font-weight:700;transform:scaleX(0.930);transform-origin:0 50%;"><u>A</u>ppliquer une mise en forme aux valeurs pour lesquelles cette formule est vraie :</span><div style="left:253px;top:353px;width:450px;height:16.5px;background:#fff;border:1px solid #c4c4c4;"></div><div style="left:247px;top:383px;width:462px;height:1px;background:#e6e6e6;"></div><span class="t" style="left:254.00px;top:406.30px;line-height:13px;font-size:9.7px;color:#000;font-weight:700;transform:scaleX(0.9034);transform-origin:0 50%;">Aperçu :</span><div style="left:297.5px;top:397px;width:250px;height:32.5px;background:#fff;border:1px solid #7a7a7a;"></div><span class="t" style="left:328.75px;top:406.50px;line-height:15px;font-size:11.2px;color:#222;transform:scaleX(0.9950);transform-origin:50% 50%;">Sans mise en forme</span><div style="left:436px;top:227.5px;width:460px;height:407px;background:#f6f6f6;border:1px solid #cbcbcb;box-shadow:0 0 0 0.500px #e2e2e2;"></div><div style="left:437px;top:228.5px;width:458px;height:24px;background:#fff;"></div><span class="t" style="left:443.50px;top:234.00px;line-height:13px;font-size:10.3px;color:#a6a6a6;transform:scaleX(0.9369);transform-origin:0 50%;">Format de cellule</span><span class="t" style="left:836.63px;top:233.50px;line-height:13px;font-size:10.3px;color:#999;">?</span><svg style="left:871px;top:234.500px" width="11" height="11" viewBox="0 0 11 11"><path d="M1 1l9 9M10 1l-9 9" stroke="#9a9a9a" stroke-width="1"/></svg><div style="left:442.5px;top:276px;width:447px;height:325.5px;background:#fff;border:1px solid #e1e1e1;"></div><div style="left:443px;top:260px;width:45.5px;height:16.5px;background:#f6f6f6;border:1px solid #e1e1e1;border-bottom:0;"></div><div style="left:535px;top:260px;width:47.5px;height:16.5px;background:#f6f6f6;border:1px solid #e1e1e1;border-bottom:0;border-left:0;"></div><div style="left:582px;top:260px;width:65.5px;height:16.5px;background:#f6f6f6;border:1px solid #e1e1e1;border-bottom:0;"></div><div style="left:488px;top:258px;width:47.5px;height:19px;background:#fff;border:1px solid #e1e1e1;border-bottom:0;"></div><span class="t" style="left:450.00px;top:262.80px;line-height:13px;font-size:9.7px;color:#000;transform:scaleX(0.9574);transform-origin:0 50%;">Nombre</span><span class="t" style="left:499.50px;top:261.80px;line-height:13px;font-size:9.7px;color:#000;transform:scaleX(0.9284);transform-origin:0 50%;">Police</span><span class="t" style="left:541.50px;top:262.80px;line-height:13px;font-size:9.7px;color:#000;transform:scaleX(0.9864);transform-origin:0 50%;">Bordure</span><span class="t" style="left:589.50px;top:262.80px;line-height:13px;font-size:9.7px;color:#000;transform:scaleX(0.9286);transform-origin:0 50%;">Remplissage</span><span class="t" style="left:449.50px;top:283.10px;line-height:13px;font-size:9.7px;color:#707070;transform:scaleX(0.9125);transform-origin:0 50%;">Police :</span><div style="left:449px;top:297px;width:216.5px;height:16.5px;background:#f6f6f6;border:1px solid #c9c9c9;box-shadow:inset 0 0 0 1px #fff;"></div><div style="left:449px;top:313px;width:216.5px;height:66.5px;background:#fff;border:1px solid #828790;border-top-width:2px;"></div><svg style="left:452.200px;top:315.6px" width="10" height="10.500" viewBox="0 0 10 10.500"><path d="M.3 .3h5.400v1.900h-.9v-1h-1.300v4.600h.7v.7h-2.400v-.7h.7v-4.600h-1.300v1h-.9z" fill="#8a8a8a"/><path d="M3 2.600h6.800v2.500h-1v-1.400h-1.500v5.500h1v.9h-3.800v-.9h1v-5.500h-1.500v1.400h-1z" fill="#111"/></svg><span class="t" style="left:466.00px;top:314.30px;line-height:13px;font-size:9.7px;color:#838383;transform:scaleX(0.9546);transform-origin:0 50%;">Calibri Light (En-têtes)</span><svg style="left:452.200px;top:326.1px" width="10" height="10.500" viewBox="0 0 10 10.500"><path d="M.3 .3h5.400v1.900h-.9v-1h-1.300v4.600h.7v.7h-2.400v-.7h.7v-4.600h-1.300v1h-.9z" fill="#8a8a8a"/><path d="M3 2.600h6.800v2.500h-1v-1.400h-1.500v5.500h1v.9h-3.800v-.9h1v-5.500h-1.500v1.400h-1z" fill="#111"/></svg><span class="t" style="left:466.00px;top:324.80px;line-height:13px;font-size:9.7px;color:#838383;transform:scaleX(0.9367);transform-origin:0 50%;">Calibri (Corps)</span><svg style="left:452.200px;top:336.6px" width="10" height="10.500" viewBox="0 0 10 10.500"><path d="M.3 .3h5.400v1.900h-.9v-1h-1.300v4.600h.7v.7h-2.400v-.7h.7v-4.600h-1.300v1h-.9z" fill="#8a8a8a"/><path d="M3 2.600h6.800v2.500h-1v-1.400h-1.500v5.500h1v.9h-3.800v-.9h1v-5.500h-1.500v1.400h-1z" fill="#111"/></svg><span class="t" style="left:466.00px;top:335.30px;line-height:13px;font-size:9.7px;color:#838383;transform:scaleX(0.9846);transform-origin:0 50%;">Algerian</span><svg style="left:452.200px;top:347.1px" width="10" height="10.500" viewBox="0 0 10 10.500"><path d="M.3 .3h5.400v1.900h-.9v-1h-1.300v4.600h.7v.7h-2.400v-.7h.7v-4.600h-1.300v1h-.9z" fill="#8a8a8a"/><path d="M3 2.600h6.800v2.500h-1v-1.400h-1.500v5.500h1v.9h-3.800v-.9h1v-5.500h-1.500v1.400h-1z" fill="#111"/></svg><span class="t" style="left:466.00px;top:345.80px;line-height:13px;font-size:9.7px;color:#838383;transform:scaleX(0.9799);transform-origin:0 50%;">Arial</span><svg style="left:452.200px;top:357.6px" width="10" height="10.500" viewBox="0 0 10 10.500"><path d="M.3 .3h5.400v1.900h-.9v-1h-1.300v4.600h.7v.7h-2.400v-.7h.7v-4.600h-1.300v1h-.9z" fill="#8a8a8a"/><path d="M3 2.600h6.800v2.500h-1v-1.400h-1.500v5.500h1v.9h-3.800v-.9h1v-5.500h-1.500v1.400h-1z" fill="#111"/></svg><span class="t" style="left:466.00px;top:356.30px;line-height:13px;font-size:9.7px;color:#838383;transform:scaleX(0.9396);transform-origin:0 50%;">Arial Black</span><svg style="left:452.200px;top:368.1px" width="10" height="10.500" viewBox="0 0 10 10.500"><path d="M.3 .3h5.400v1.900h-.9v-1h-1.300v4.600h.7v.7h-2.400v-.7h.7v-4.600h-1.300v1h-.9z" fill="#8a8a8a"/><path d="M3 2.600h6.800v2.500h-1v-1.400h-1.500v5.500h1v.9h-3.800v-.9h1v-5.500h-1.500v1.400h-1z" fill="#111"/></svg><span class="t" style="left:466.00px;top:366.80px;line-height:13px;font-size:9.7px;color:#838383;transform:scaleX(0.9850);transform-origin:0 50%;">Arial Narrow</span><div style="left:650px;top:315px;width:14.5px;height:63.5px;background:#f6f6f6;"></div><svg style="left:652.500px;top:318.500px" width="9" height="6" viewBox="0 0 9 6"><path d="M1 5l3.500-3.500L8 5" fill="none" stroke="#b8b8b8" stroke-width="1"/></svg><svg style="left:652.500px;top:368.500px" width="9" height="6" viewBox="0 0 9 6"><path d="M1 1l3.500 3.500L8 1" fill="none" stroke="#b8b8b8" stroke-width="1"/></svg><span class="t" style="left:449.50px;top:381.20px;line-height:13px;font-size:9.7px;color:#000;transform:scaleX(0.9671);transform-origin:0 50%;">Sou<u>l</u>ignement :</span><div style="left:449px;top:396px;width:216.5px;height:17px;background:#fff;border:1px solid #adadad;"></div><div style="left:651px;top:397px;width:13.5px;height:15px;background:#e1e1e1;border:1px solid #adadad;"></div><svg style="left:653.500px;top:402px" width="9" height="6" viewBox="0 0 9 6"><path d="M1 1l3.500 3.500L8 1" fill="none" stroke="#444" stroke-width="1"/></svg><div style="left:449px;top:422px;width:215.5px;height:58.5px;border:1px solid #dcdcdc;"></div><div style="left:452.5px;top:415px;width:30px;height:12px;background:#fff;"></div><span class="t" style="left:454.00px;top:414.80px;line-height:13px;font-size:9.7px;color:#000;transform:scaleX(1.0127);transform-origin:0 50%;">Attributs</span><div style="left:456.5px;top:433.5px;width:10px;height:10px;background:#fff;border:1px solid #333;"></div><div style="left:459px;top:436px;width:5px;height:5px;background:#333;"></div><span class="t" style="left:470.50px;top:432.00px;line-height:13px;font-size:9.7px;color:#000;transform:scaleX(0.9281);transform-origin:0 50%;"><u>B</u>arré</span><div style="left:456.5px;top:449.5px;width:10px;height:10px;background:#fff;border:1px solid #cfcfcf;"></div><span class="t" style="left:470.50px;top:448.00px;line-height:13px;font-size:9.7px;color:#959595;transform:scaleX(0.9528);transform-origin:0 50%;">Exposant</span><div style="left:456.5px;top:464.5px;width:10px;height:10px;background:#fff;border:1px solid #cfcfcf;"></div><span class="t" style="left:470.50px;top:463.30px;line-height:13px;font-size:9.7px;color:#8a8a8a;transform:scaleX(0.9668);transform-origin:0 50%;">Indice</span><span class="t" style="left:672.00px;top:283.10px;line-height:13px;font-size:9.7px;color:#000;transform:scaleX(0.9100);transform-origin:0 50%;"><u>S</u>tyle :</span><div style="left:672px;top:297px;width:123px;height:16.5px;background:#fff;border:1px solid #c9c9c9;"></div><div style="left:672px;top:313px;width:123px;height:66.5px;background:#fff;border:1px solid #828790;border-top-width:2px;"></div><span class="t" style="left:676.00px;top:314.30px;line-height:13px;font-size:9.7px;color:#000;transform:scaleX(0.9605);transform-origin:0 50%;">Normal</span><span class="t" style="left:676.00px;top:324.80px;line-height:13px;font-size:9.7px;color:#000;transform:scaleX(1.0400);transform-origin:0 50%;">Italique</span><span class="t" style="left:676.00px;top:335.30px;line-height:13px;font-size:9.7px;color:#000;transform:scaleX(0.8810);transform-origin:0 50%;">Gras</span><span class="t" style="left:676.00px;top:345.80px;line-height:13px;font-size:9.7px;color:#000;transform:scaleX(1.0112);transform-origin:0 50%;">Gras italique</span><div style="left:780px;top:315px;width:14px;height:63.5px;background:#f6f6f6;"></div><svg style="left:782.500px;top:318.500px" width="9" height="6" viewBox="0 0 9 6"><path d="M1 5l3.500-3.500L8 5" fill="none" stroke="#b8b8b8" stroke-width="1"/></svg><span class="t" style="left:802.50px;top:283.10px;line-height:13px;font-size:9.7px;color:#707070;transform:scaleX(0.9647);transform-origin:0 50%;">Taille :</span><div style="left:802px;top:297px;width:81px;height:16.5px;background:#f6f6f6;border:1px solid #c9c9c9;box-shadow:inset 0 0 0 1px #fff;"></div><div style="left:802px;top:313px;width:81px;height:66.5px;background:#fff;border:1px solid #828790;border-top-width:2px;"></div><span class="t" style="left:805.00px;top:314.30px;line-height:13px;font-size:9.7px;color:#8a8a8a;">8</span><div style="left:868px;top:315px;width:14px;height:63.5px;background:#f6f6f6;"></div><svg style="left:870.500px;top:318.500px" width="9" height="6" viewBox="0 0 9 6"><path d="M1 5l3.500-3.500L8 5" fill="none" stroke="#b8b8b8" stroke-width="1"/></svg><span class="t" style="left:672.00px;top:381.20px;line-height:13px;font-size:9.7px;color:#000;transform:scaleX(0.9666);transform-origin:0 50%;">Co<u>u</u>leur :</span><div style="left:672px;top:396px;width:123px;height:17px;background:#fff;border:1px solid #adadad;"></div><span class="t" style="left:698.00px;top:398.10px;line-height:13px;font-size:9.7px;color:#000;transform:scaleX(0.9742);transform-origin:50% 50%;">Automatique</span><div style="left:672.5px;top:422px;width:211px;height:58.5px;border:1px solid #dcdcdc;"></div><div style="left:676px;top:415px;width:34px;height:12px;background:#fff;"></div><span class="t" style="left:677.50px;top:414.80px;line-height:13px;font-size:9.7px;color:#000;transform:scaleX(0.9608);transform-origin:0 50%;">Aperçu</span><div style="left:680px;top:432.5px;width:196px;height:44px;background:#fff;border:1px solid #555;"></div><div style="left:680px;top:457.5px;width:196px;height:1px;background:#555;"></div><span class="t" style="left:449.60px;top:505.50px;line-height:13px;font-size:9.7px;color:#000;transform:scaleX(0.9779);transform-origin:0 50%;">Dans le format conditionnel vous pouvez choisir un style de police, le soulignement, la couleur et le style</span><span class="t" style="left:449.50px;top:516.50px;line-height:13px;font-size:9.7px;color:#000;transform:scaleX(0.9481);transform-origin:0 50%;">barré.</span><div style="left:760px;top:606px;width:61px;height:20.5px;background:#e1e1e1;border:1px solid #adadad;"></div><span class="t" style="left:783.50px;top:611.70px;line-height:13px;font-size:9.7px;color:#000;">OK</span><div style="left:829px;top:606px;width:60px;height:20.5px;background:#e1e1e1;border:1px solid #adadad;"></div><span class="t" style="left:842.30px;top:611.70px;line-height:13px;font-size:9.7px;color:#000;transform:scaleX(1.0477);transform-origin:50% 50%;">Annuler</span><div style="left:707px;top:323.5px;width:266.5px;height:294.5px;background:#f6f6f6;border:2px solid #8fc3ee;"></div><div style="left:707px;top:323.5px;width:266.5px;height:25px;background:#0078d7;"></div><span class="t" style="left:715.00px;top:330.50px;line-height:13px;font-size:10.3px;color:#fff;transform:scaleX(0.9219);transform-origin:0 50%;">Couleurs</span><span class="t" style="left:914.63px;top:330.00px;line-height:13px;font-size:10.3px;color:#fff;">?</span><svg style="left:949.500px;top:331.500px" width="10" height="10" viewBox="0 0 10 10"><path d="M1 1l8 8M9 1l-8 8" stroke="#fff" stroke-width="1.200"/></svg><div style="left:714px;top:372px;width:184px;height:237.5px;background:#fff;border:1px solid #e1e1e1;"></div><div style="left:767px;top:358.5px;width:75px;height:14px;background:#f6f6f6;border:1px solid #e1e1e1;border-bottom:0;"></div><div style="left:714px;top:356px;width:53.5px;height:17px;background:#fff;border:1px solid #e1e1e1;border-bottom:0;"></div><div style="left:716px;top:358px;width:48px;height:13px;border:1px dotted #222;"></div><span class="t" style="left:720.30px;top:358.10px;line-height:13px;font-size:9.7px;color:#000;transform:scaleX(0.9739);transform-origin:0 50%;">Standard</span><span class="t" style="left:773.30px;top:359.10px;line-height:13px;font-size:9.7px;color:#000;transform:scaleX(0.9208);transform-origin:0 50%;">Personnalisées</span><span class="t" style="left:720.60px;top:378.70px;line-height:13px;font-size:9.7px;color:#000;transform:scaleX(0.9512);transform-origin:0 50%;"><u>C</u>ouleurs :</span><div style="left:906.5px;top:355px;width:60.5px;height:18px;background:#e1e1e1;border:2px solid #0078d7;"></div><span class="t" style="left:929.50px;top:357.80px;line-height:13px;font-size:9.7px;color:#000;">OK</span><div style="left:906.5px;top:379px;width:60.5px;height:18px;background:#e1e1e1;border:1px solid #adadad;"></div><span class="t" style="left:919.80px;top:381.80px;line-height:13px;font-size:9.7px;color:#000;transform:scaleX(1.0327);transform-origin:50% 50%;">Annuler</span><span class="t" style="left:916.65px;top:538.50px;line-height:13px;font-size:9.7px;color:#000;transform:scaleX(0.9681);transform-origin:50% 50%;">Nouvelle</span><div style="left:916.5px;top:555px;width:39.5px;height:39.5px;background:#000;"></div><span class="t" style="left:918.27px;top:599.80px;line-height:13px;font-size:9.7px;color:#000;transform:scaleX(0.9719);transform-origin:50% 50%;">Actuelle</span><svg style="left:963px;top:607px" width="10" height="10" viewBox="0 0 10 10"><path d="M9.500 1L1 9.500M9.500 4L4 9.500M9.500 7L7 9.500" stroke="#a8a8a8" stroke-width="1"/></svg><svg style="left:714px;top:372px" width="184" height="237" viewBox="0 0 184 237"><polygon points="48.50,24.42 54.35,27.77 54.35,34.47 48.50,37.82 42.65,34.47 42.65,27.77" fill="#003366"/><polygon points="59.90,24.42 65.75,27.77 65.75,34.47 59.90,37.82 54.05,34.47 54.05,27.77" fill="#336699"/><polygon points="71.30,24.42 77.15,27.77 77.15,34.47 71.30,37.82 65.45,34.47 65.45,27.77" fill="#3366CC"/><polygon points="82.70,24.42 88.55,27.77 88.55,34.47 82.70,37.82 76.85,34.47 76.85,27.77" fill="#003399"/><polygon points="94.10,24.42 99.95,27.77 99.95,34.47 94.10,37.82 88.25,34.47 88.25,27.77" fill="#000099"/><polygon points="105.50,24.42 111.35,27.77 111.35,34.47 105.50,37.82 99.65,34.47 99.65,27.77" fill="#0000CC"/><polygon points="116.90,24.42 122.75,27.77 122.75,34.47 116.90,37.82 111.05,34.47 111.05,27.77" fill="#000066"/><polygon points="42.80,34.15 48.65,37.50 48.65,44.20 42.80,47.55 36.95,44.20 36.95,37.50" fill="#006666"/><polygon points="54.20,34.15 60.05,37.50 60.05,44.20 54.20,47.55 48.35,44.20 48.35,37.50" fill="#006699"/><polygon points="65.60,34.15 71.45,37.50 71.45,44.20 65.60,47.55 59.75,44.20 59.75,37.50" fill="#0099CC"/><polygon points="77.00,34.15 82.85,37.50 82.85,44.20 77.00,47.55 71.15,44.20 71.15,37.50" fill="#0066CC"/><polygon points="88.40,34.15 94.25,37.50 94.25,44.20 88.40,47.55 82.55,44.20 82.55,37.50" fill="#0033CC"/><polygon points="99.80,34.15 105.65,37.50 105.65,44.20 99.80,47.55 93.95,44.20 93.95,37.50" fill="#0000FF"/><polygon points="111.20,34.15 117.05,37.50 117.05,44.20 111.20,47.55 105.35,44.20 105.35,37.50" fill="#3333FF"/><polygon points="122.60,34.15 128.45,37.50 128.45,44.20 122.60,47.55 116.75,44.20 116.75,37.50" fill="#333399"/><polygon points="37.10,43.88 42.95,47.23 42.95,53.93 37.10,57.28 31.25,53.93 31.25,47.23" fill="#008080"/><polygon points="48.50,43.88 54.35,47.23 54.35,53.93 48.50,57.28 42.65,53.93 42.65,47.23" fill="#009999"/><polygon points="59.90,43.88 65.75,47.23 65.75,53.93 59.90,57.28 54.05,53.93 54.05,47.23" fill="#33CCCC"/><polygon points="71.30,43.88 77.15,47.23 77.15,53.93 71.30,57.28 65.45,53.93 65.45,47.23" fill="#00CCFF"/><polygon points="82.70,43.88 88.55,47.23 88.55,53.93 82.70,57.28 76.85,53.93 76.85,47.23" fill="#0099FF"/><polygon points="94.10,43.88 99.95,47.23 99.95,53.93 94.10,57.28 88.25,53.93 88.25,47.23" fill="#0066FF"/><polygon points="105.50,43.88 111.35,47.23 111.35,53.93 105.50,57.28 99.65,53.93 99.65,47.23" fill="#3366FF"/><polygon points="116.90,43.88 122.75,47.23 122.75,53.93 116.90,57.28 111.05,53.93 111.05,47.23" fill="#3333CC"/><polygon points="128.30,43.88 134.15,47.23 134.15,53.93 128.30,57.28 122.45,53.93 122.45,47.23" fill="#666699"/><polygon points="31.40,53.61 37.25,56.96 37.25,63.66 31.40,67.01 25.55,63.66 25.55,56.96" fill="#339966"/><polygon points="42.80,53.61 48.65,56.96 48.65,63.66 42.80,67.01 36.95,63.66 36.95,56.96" fill="#00CC99"/><polygon points="54.20,53.61 60.05,56.96 60.05,63.66 54.20,67.01 48.35,63.66 48.35,56.96" fill="#00FFCC"/><polygon points="65.60,53.61 71.45,56.96 71.45,63.66 65.60,67.01 59.75,63.66 59.75,56.96" fill="#00FFFF"/><polygon points="77.00,53.61 82.85,56.96 82.85,63.66 77.00,67.01 71.15,63.66 71.15,56.96" fill="#33CCFF"/><polygon points="88.40,53.61 94.25,56.96 94.25,63.66 88.40,67.01 82.55,63.66 82.55,56.96" fill="#3399FF"/><polygon points="99.80,53.61 105.65,56.96 105.65,63.66 99.80,67.01 93.95,63.66 93.95,56.96" fill="#6699FF"/><polygon points="111.20,53.61 117.05,56.96 117.05,63.66 111.20,67.01 105.35,63.66 105.35,56.96" fill="#6666FF"/><polygon points="122.60,53.61 128.45,56.96 128.45,63.66 122.60,67.01 116.75,63.66 116.75,56.96" fill="#6600FF"/><polygon points="134.00,53.61 139.85,56.96 139.85,63.66 134.00,67.01 128.15,63.66 128.15,56.96" fill="#6600CC"/><polygon points="25.70,63.34 31.55,66.69 31.55,73.39 25.70,76.74 19.85,73.39 19.85,66.69" fill="#339933"/><polygon points="37.10,63.34 42.95,66.69 42.95,73.39 37.10,76.74 31.25,73.39 31.25,66.69" fill="#00CC66"/><polygon points="48.50,63.34 54.35,66.69 54.35,73.39 48.50,76.74 42.65,73.39 42.65,66.69" fill="#00FF99"/><polygon points="59.90,63.34 65.75,66.69 65.75,73.39 59.90,76.74 54.05,73.39 54.05,66.69" fill="#66FFCC"/><polygon points="71.30,63.34 77.15,66.69 77.15,73.39 71.30,76.74 65.45,73.39 65.45,66.69" fill="#66FFFF"/><polygon points="82.70,63.34 88.55,66.69 88.55,73.39 82.70,76.74 76.85,73.39 76.85,66.69" fill="#66CCFF"/><polygon points="94.10,63.34 99.95,66.69 99.95,73.39 94.10,76.74 88.25,73.39 88.25,66.69" fill="#99CCFF"/><polygon points="105.50,63.34 111.35,66.69 111.35,73.39 105.50,76.74 99.65,73.39 99.65,66.69" fill="#9999FF"/><polygon points="116.90,63.34 122.75,66.69 122.75,73.39 116.90,76.74 111.05,73.39 111.05,66.69" fill="#9966FF"/><polygon points="128.30,63.34 134.15,66.69 134.15,73.39 128.30,76.74 122.45,73.39 122.45,66.69" fill="#9933FF"/><polygon points="139.70,63.34 145.55,66.69 145.55,73.39 139.70,76.74 133.85,73.39 133.85,66.69" fill="#9900FF"/><polygon points="20.00,73.07 25.85,76.42 25.85,83.12 20.00,86.47 14.15,83.12 14.15,76.42" fill="#006600"/><polygon points="31.40,73.07 37.25,76.42 37.25,83.12 31.40,86.47 25.55,83.12 25.55,76.42" fill="#00CC00"/><polygon points="42.80,73.07 48.65,76.42 48.65,83.12 42.80,86.47 36.95,83.12 36.95,76.42" fill="#00FF00"/><polygon points="54.20,73.07 60.05,76.42 60.05,83.12 54.20,86.47 48.35,83.12 48.35,76.42" fill="#66FF99"/><polygon points="65.60,73.07 71.45,76.42 71.45,83.12 65.60,86.47 59.75,83.12 59.75,76.42" fill="#99FFCC"/><polygon points="77.00,73.07 82.85,76.42 82.85,83.12 77.00,86.47 71.15,83.12 71.15,76.42" fill="#CCFFFF"/><polygon points="88.40,73.07 94.25,76.42 94.25,83.12 88.40,86.47 82.55,83.12 82.55,76.42" fill="#CCECFF"/><polygon points="99.80,73.07 105.65,76.42 105.65,83.12 99.80,86.47 93.95,83.12 93.95,76.42" fill="#CCCCFF"/><polygon points="111.20,73.07 117.05,76.42 117.05,83.12 111.20,86.47 105.35,83.12 105.35,76.42" fill="#CC99FF"/><polygon points="122.60,73.07 128.45,76.42 128.45,83.12 122.60,86.47 116.75,83.12 116.75,76.42" fill="#CC66FF"/><polygon points="134.00,73.07 139.85,76.42 139.85,83.12 134.00,86.47 128.15,83.12 128.15,76.42" fill="#CC00FF"/><polygon points="145.40,73.07 151.25,76.42 151.25,83.12 145.40,86.47 139.55,83.12 139.55,76.42" fill="#9900CC"/><polygon points="14.30,82.80 20.15,86.15 20.15,92.85 14.30,96.20 8.45,92.85 8.45,86.15" fill="#003300"/><polygon points="25.70,82.80 31.55,86.15 31.55,92.85 25.70,96.20 19.85,92.85 19.85,86.15" fill="#008000"/><polygon points="37.10,82.80 42.95,86.15 42.95,92.85 37.10,96.20 31.25,92.85 31.25,86.15" fill="#33CC33"/><polygon points="48.50,82.80 54.35,86.15 54.35,92.85 48.50,96.20 42.65,92.85 42.65,86.15" fill="#66FF66"/><polygon points="59.90,82.80 65.75,86.15 65.75,92.85 59.90,96.20 54.05,92.85 54.05,86.15" fill="#99FF99"/><polygon points="71.30,82.80 77.15,86.15 77.15,92.85 71.30,96.20 65.45,92.85 65.45,86.15" fill="#CCFFCC"/><polygon points="82.70,82.80 88.55,86.15 88.55,92.85 82.70,96.20 76.85,92.85 76.85,86.15" fill="#FFFFFF"/><polygon points="94.10,82.80 99.95,86.15 99.95,92.85 94.10,96.20 88.25,92.85 88.25,86.15" fill="#FFCCFF"/><polygon points="105.50,82.80 111.35,86.15 111.35,92.85 105.50,96.20 99.65,92.85 99.65,86.15" fill="#FF99FF"/><polygon points="116.90,82.80 122.75,86.15 122.75,92.85 116.90,96.20 111.05,92.85 111.05,86.15" fill="#FF66FF"/><polygon points="128.30,82.80 134.15,86.15 134.15,92.85 128.30,96.20 122.45,92.85 122.45,86.15" fill="#FF00FF"/><polygon points="139.70,82.80 145.55,86.15 145.55,92.85 139.70,96.20 133.85,92.85 133.85,86.15" fill="#CC00CC"/><polygon points="151.10,82.80 156.95,86.15 156.95,92.85 151.10,96.20 145.25,92.85 145.25,86.15" fill="#660066"/><polygon points="20.00,92.53 25.85,95.88 25.85,102.58 20.00,105.93 14.15,102.58 14.15,95.88" fill="#336600"/><polygon points="31.40,92.53 37.25,95.88 37.25,102.58 31.40,105.93 25.55,102.58 25.55,95.88" fill="#009900"/><polygon points="42.80,92.53 48.65,95.88 48.65,102.58 42.80,105.93 36.95,102.58 36.95,95.88" fill="#66FF33"/><polygon points="54.20,92.53 60.05,95.88 60.05,102.58 54.20,105.93 48.35,102.58 48.35,95.88" fill="#99FF66"/><polygon points="65.60,92.53 71.45,95.88 71.45,102.58 65.60,105.93 59.75,102.58 59.75,95.88" fill="#CCFF99"/><polygon points="77.00,92.53 82.85,95.88 82.85,102.58 77.00,105.93 71.15,102.58 71.15,95.88" fill="#FFFFCC"/><polygon points="88.40,92.53 94.25,95.88 94.25,102.58 88.40,105.93 82.55,102.58 82.55,95.88" fill="#FFCCCC"/><polygon points="99.80,92.53 105.65,95.88 105.65,102.58 99.80,105.93 93.95,102.58 93.95,95.88" fill="#FF99CC"/><polygon points="111.20,92.53 117.05,95.88 117.05,102.58 111.20,105.93 105.35,102.58 105.35,95.88" fill="#FF66CC"/><polygon points="122.60,92.53 128.45,95.88 128.45,102.58 122.60,105.93 116.75,102.58 116.75,95.88" fill="#FF33CC"/><polygon points="134.00,92.53 139.85,95.88 139.85,102.58 134.00,105.93 128.15,102.58 128.15,95.88" fill="#CC0099"/><polygon points="145.40,92.53 151.25,95.88 151.25,102.58 145.40,105.93 139.55,102.58 139.55,95.88" fill="#800080"/><polygon points="25.70,102.26 31.55,105.61 31.55,112.31 25.70,115.66 19.85,112.31 19.85,105.61" fill="#333300"/><polygon points="37.10,102.26 42.95,105.61 42.95,112.31 37.10,115.66 31.25,112.31 31.25,105.61" fill="#669900"/><polygon points="48.50,102.26 54.35,105.61 54.35,112.31 48.50,115.66 42.65,112.31 42.65,105.61" fill="#99FF33"/><polygon points="59.90,102.26 65.75,105.61 65.75,112.31 59.90,115.66 54.05,112.31 54.05,105.61" fill="#CCFF66"/><polygon points="71.30,102.26 77.15,105.61 77.15,112.31 71.30,115.66 65.45,112.31 65.45,105.61" fill="#FFFF99"/><polygon points="82.70,102.26 88.55,105.61 88.55,112.31 82.70,115.66 76.85,112.31 76.85,105.61" fill="#FFCC99"/><polygon points="94.10,102.26 99.95,105.61 99.95,112.31 94.10,115.66 88.25,112.31 88.25,105.61" fill="#FF9999"/><polygon points="105.50,102.26 111.35,105.61 111.35,112.31 105.50,115.66 99.65,112.31 99.65,105.61" fill="#FF6699"/><polygon points="116.90,102.26 122.75,105.61 122.75,112.31 116.90,115.66 111.05,112.31 111.05,105.61" fill="#FF3399"/><polygon points="128.30,102.26 134.15,105.61 134.15,112.31 128.30,115.66 122.45,112.31 122.45,105.61" fill="#CC3399"/><polygon points="139.70,102.26 145.55,105.61 145.55,112.31 139.70,115.66 133.85,112.31 133.85,105.61" fill="#990099"/><polygon points="31.40,111.99 37.25,115.34 37.25,122.04 31.40,125.39 25.55,122.04 25.55,115.34" fill="#666633"/><polygon points="42.80,111.99 48.65,115.34 48.65,122.04 42.80,125.39 36.95,122.04 36.95,115.34" fill="#99CC00"/><polygon points="54.20,111.99 60.05,115.34 60.05,122.04 54.20,125.39 48.35,122.04 48.35,115.34" fill="#CCFF33"/><polygon points="65.60,111.99 71.45,115.34 71.45,122.04 65.60,125.39 59.75,122.04 59.75,115.34" fill="#FFFF66"/><polygon points="77.00,111.99 82.85,115.34 82.85,122.04 77.00,125.39 71.15,122.04 71.15,115.34" fill="#FFCC66"/><polygon points="88.40,111.99 94.25,115.34 94.25,122.04 88.40,125.39 82.55,122.04 82.55,115.34" fill="#FF9966"/><polygon points="99.80,111.99 105.65,115.34 105.65,122.04 99.80,125.39 93.95,122.04 93.95,115.34" fill="#FF7C80"/><polygon points="111.20,111.99 117.05,115.34 117.05,122.04 111.20,125.39 105.35,122.04 105.35,115.34" fill="#FF0066"/><polygon points="122.60,111.99 128.45,115.34 128.45,122.04 122.60,125.39 116.75,122.04 116.75,115.34" fill="#D60093"/><polygon points="134.00,111.99 139.85,115.34 139.85,122.04 134.00,125.39 128.15,122.04 128.15,115.34" fill="#993366"/><polygon points="37.10,121.72 42.95,125.07 42.95,131.77 37.10,135.12 31.25,131.77 31.25,125.07" fill="#808000"/><polygon points="48.50,121.72 54.35,125.07 54.35,131.77 48.50,135.12 42.65,131.77 42.65,125.07" fill="#CCCC00"/><polygon points="59.90,121.72 65.75,125.07 65.75,131.77 59.90,135.12 54.05,131.77 54.05,125.07" fill="#FFFF00"/><polygon points="71.30,121.72 77.15,125.07 77.15,131.77 71.30,135.12 65.45,131.77 65.45,125.07" fill="#FFCC00"/><polygon points="82.70,121.72 88.55,125.07 88.55,131.77 82.70,135.12 76.85,131.77 76.85,125.07" fill="#FF9933"/><polygon points="94.10,121.72 99.95,125.07 99.95,131.77 94.10,135.12 88.25,131.77 88.25,125.07" fill="#FF6600"/><polygon points="105.50,121.72 111.35,125.07 111.35,131.77 105.50,135.12 99.65,131.77 99.65,125.07" fill="#FF5050"/><polygon points="116.90,121.72 122.75,125.07 122.75,131.77 116.90,135.12 111.05,131.77 111.05,125.07" fill="#CC0066"/><polygon points="128.30,121.72 134.15,125.07 134.15,131.77 128.30,135.12 122.45,131.77 122.45,125.07" fill="#660033"/><polygon points="42.80,131.45 48.65,134.80 48.65,141.50 42.80,144.85 36.95,141.50 36.95,134.80" fill="#996633"/><polygon points="54.20,131.45 60.05,134.80 60.05,141.50 54.20,144.85 48.35,141.50 48.35,134.80" fill="#CC9900"/><polygon points="65.60,131.45 71.45,134.80 71.45,141.50 65.60,144.85 59.75,141.50 59.75,134.80" fill="#FF9900"/><polygon points="77.00,131.45 82.85,134.80 82.85,141.50 77.00,144.85 71.15,141.50 71.15,134.80" fill="#CC6600"/><polygon points="88.40,131.45 94.25,134.80 94.25,141.50 88.40,144.85 82.55,141.50 82.55,134.80" fill="#FF3300"/><polygon points="99.80,131.45 105.65,134.80 105.65,141.50 99.80,144.85 93.95,141.50 93.95,134.80" fill="#FF0000"/><polygon points="111.20,131.45 117.05,134.80 117.05,141.50 111.20,144.85 105.35,141.50 105.35,134.80" fill="#CC0000"/><polygon points="122.60,131.45 128.45,134.80 128.45,141.50 122.60,144.85 116.75,141.50 116.75,134.80" fill="#990033"/><polygon points="48.50,141.18 54.35,144.53 54.35,151.23 48.50,154.58 42.65,151.23 42.65,144.53" fill="#663300"/><polygon points="59.90,141.18 65.75,144.53 65.75,151.23 59.90,154.58 54.05,151.23 54.05,144.53" fill="#996600"/><polygon points="71.30,141.18 77.15,144.53 77.15,151.23 71.30,154.58 65.45,151.23 65.45,144.53" fill="#CC3300"/><polygon points="82.70,141.18 88.55,144.53 88.55,151.23 82.70,154.58 76.85,151.23 76.85,144.53" fill="#993300"/><polygon points="94.10,141.18 99.95,144.53 99.95,151.23 94.10,154.58 88.25,151.23 88.25,144.53" fill="#990000"/><polygon points="105.50,141.18 111.35,144.53 111.35,151.23 105.50,154.58 99.65,151.23 99.65,144.53" fill="#800000"/><polygon points="116.90,141.18 122.75,144.53 122.75,151.23 116.90,154.58 111.05,151.23 111.05,144.53" fill="#A50021"/><polygon points="53.80,164.10 59.65,167.45 59.65,174.15 53.80,177.50 47.95,174.15 47.95,167.45" fill="#E3E6E3"/><polygon points="65.23,164.10 71.08,167.45 71.08,174.15 65.23,177.50 59.38,174.15 59.38,167.45" fill="#B2B2B2"/><polygon points="76.66,164.10 82.51,167.45 82.51,174.15 76.66,177.50 70.81,174.15 70.81,167.45" fill="#808080"/><polygon points="88.09,164.10 93.94,167.45 93.94,174.15 88.09,177.50 82.24,174.15 82.24,167.45" fill="#5F5F5F"/><polygon points="99.52,164.10 105.37,167.45 105.37,174.15 99.52,177.50 93.67,174.15 93.67,167.45" fill="#333333"/><polygon points="110.95,164.10 116.80,167.45 116.80,174.15 110.95,177.50 105.10,174.15 105.10,167.45" fill="#1C1C1C"/><polygon points="122.38,164.10 128.23,167.45 128.23,174.15 122.38,177.50 116.53,174.15 116.53,167.45" fill="#080808"/><polygon points="48.10,174.00 53.95,177.35 53.95,184.05 48.10,187.40 42.25,184.05 42.25,177.35" fill="#F0F0F0"/><polygon points="59.53,174.00 65.38,177.35 65.38,184.05 59.53,187.40 53.68,184.05 53.68,177.35" fill="#C0C0C0"/><polygon points="70.96,174.00 76.81,177.35 76.81,184.05 70.96,187.40 65.11,184.05 65.11,177.35" fill="#969696"/><polygon points="82.39,174.00 88.24,177.35 88.24,184.05 82.39,187.40 76.54,184.05 76.54,177.35" fill="#777777"/><polygon points="93.82,174.00 99.67,177.35 99.67,184.05 93.82,187.40 87.97,184.05 87.97,177.35" fill="#4D4D4D"/><polygon points="105.25,174.00 111.10,177.35 111.10,184.05 105.25,187.40 99.40,184.05 99.40,177.35" fill="#292929"/><polygon points="116.68,174.00 122.53,177.35 122.53,184.05 116.68,187.40 110.83,184.05 110.83,177.35" fill="#111111"/><polygon points="145.80,159.30 159.10,166.60 159.10,181.20 145.80,188.50 132.50,181.20 132.50,166.60" fill="#fff" stroke="#000" stroke-width="0.900"/><polygon points="145.80,161.90 156.80,167.90 156.80,179.90 145.80,185.90 134.80,179.90 134.80,167.90" fill="#000"/></svg></div></body></html>
